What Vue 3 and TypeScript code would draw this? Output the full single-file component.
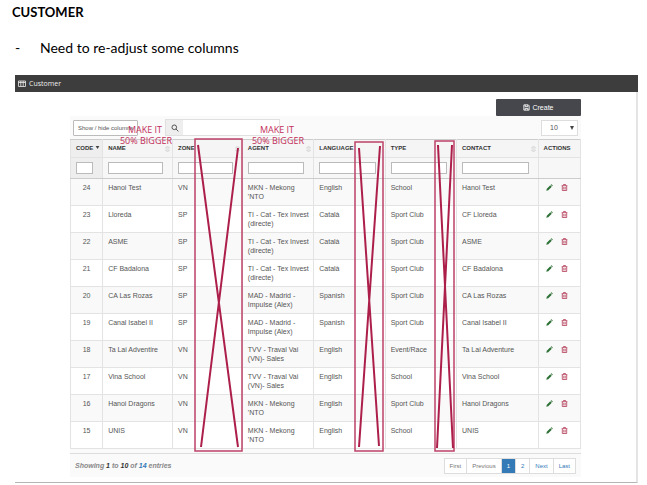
<script setup lang="ts">
interface Customer {
  code: number
  name: string
  zone: string
  agent: string
  language: string
  type: string
  contact: string
}

const columns = [
  { key: 'name', label: 'Name', sort: true },
  { key: 'zone', label: 'Zone', sort: true },
  { key: 'agent', label: 'Agent', sort: true },
  { key: 'language', label: 'Language', sort: false },
  { key: 'type', label: 'Type', sort: false },
  { key: 'contact', label: 'Contact', sort: true },
]

const mkn = "MKN - Mekong 'NTO"
const cat = 'TI - Cat - Tex Invest (directe)'
const mad = 'MAD - Madrid - Impulse (Alex)'
const tvv = 'TVV - Traval Vai (VN)- Sales'

const customers: Customer[] = [
  { code: 24, name: 'Hanoi Test', zone: 'VN', agent: mkn, language: 'English', type: 'School', contact: 'Hanoi Test' },
  { code: 23, name: 'Lloreda', zone: 'SP', agent: cat, language: 'Català', type: 'Sport Club', contact: 'CF Lloreda' },
  { code: 22, name: 'ASME', zone: 'SP', agent: cat, language: 'Català', type: 'Sport Club', contact: 'ASME' },
  { code: 21, name: 'CF Badalona', zone: 'SP', agent: cat, language: 'Català', type: 'Sport Club', contact: 'CF Badalona' },
  { code: 20, name: 'CA Las Rozas', zone: 'SP', agent: mad, language: 'Spanish', type: 'Sport Club', contact: 'CA Las Rozas' },
  { code: 19, name: 'Canal Isabel II', zone: 'SP', agent: mad, language: 'Spanish', type: 'Sport Club', contact: 'Canal Isabel II' },
  { code: 18, name: 'Ta Lai Adventire', zone: 'VN', agent: tvv, language: 'English', type: 'Event/Race', contact: 'Ta Lai Adventure' },
  { code: 17, name: 'Vina School', zone: 'VN', agent: tvv, language: 'English', type: 'School', contact: 'Vina School' },
  { code: 16, name: 'Hanoi Dragons', zone: 'VN', agent: mkn, language: 'English', type: 'Sport Club', contact: 'Hanoi Dragons' },
  { code: 15, name: 'UNIS', zone: 'VN', agent: mkn, language: 'English', type: 'School', contact: 'UNIS' },
]
</script>

<template>
  <main class="doc">
    <h1>CUSTOMER</h1>
    <ul class="notes">
      <li>Need to re-adjust some columns</li>
    </ul>

    <section class="window">
      <header class="titlebar">
        <svg class="grid-icon" viewBox="0 0 8 7" aria-hidden="true">
          <path d="M.5 1h7v5.500h-7zM.5 2.500h7M2.800 1v5.500M5.200 1v5.500" />
        </svg>
        <h2>Customer</h2>
      </header>

      <div class="body">
        <div class="create-row">
          <button type="button" class="create">
            <svg viewBox="0 0 8 8" aria-hidden="true">
              <path d="M1 1h5l1 1v5H1zM2.500 1v2h3V1M2.500 7V5h3v2" />
            </svg>
            Create
          </button>
        </div>

        <div class="panel">
          <div class="toolbar">
            <button type="button" class="toggle">Show / hide columns</button>
            <label class="search">
              <span class="search-icon">
                <svg viewBox="0 0 9 9" aria-hidden="true">
                  <circle cx="3.700" cy="3.700" r="2.600" />
                  <path d="M5.600 5.600L8.300 8.300" />
                </svg>
              </span>
              <input type="search" aria-label="Search customers" />
            </label>
            <div class="size">
              <select aria-label="Rows per page">
                <option>10</option>
                <option>25</option>
              </select>
              <svg viewBox="0 0 4 4" aria-hidden="true"><path d="M0 0h4L2 4z" /></svg>
            </div>
          </div>

          <div class="grid">
            <table>
              <colgroup>
                <col class="c-code" />
                <col class="c-name" />
                <col class="c-name" />
                <col class="c-wide" />
                <col class="c-wide" />
                <col class="c-wide" />
                <col class="c-contact" />
                <col class="c-actions" />
              </colgroup>
              <thead>
                <tr class="heads">
                  <th class="sorted" scope="col">
                    Code<svg class="caret" viewBox="0 0 5 4" aria-hidden="true"><path d="M0 0h5L2.500 4z" /></svg>
                  </th>
                  <th v-for="c in columns" :key="c.key" scope="col">
                    <div class="head">
                      {{ c.label }}
                      <svg v-if="c.sort" class="sort" viewBox="0 0 5 8" aria-hidden="true">
                        <path d="M.5 3l2-2 2 2zM.5 5l2 2 2-2z" />
                      </svg>
                    </div>
                  </th>
                  <th scope="col">Actions</th>
                </tr>
                <tr class="filters">
                  <td class="sorted"><input type="text" aria-label="Filter by code" /></td>
                  <td v-for="c in columns" :key="c.key">
                    <input type="text" :aria-label="'Filter by ' + c.label" />
                  </td>
                  <td></td>
                </tr>
              </thead>
              <tbody>
                <tr v-for="row in customers" :key="row.code">
                  <td class="code">{{ row.code }}</td>
                  <td>{{ row.name }}</td>
                  <td>{{ row.zone }}</td>
                  <td>{{ row.agent }}</td>
                  <td>{{ row.language }}</td>
                  <td>{{ row.type }}</td>
                  <td>{{ row.contact }}</td>
                  <td>
                    <div class="actions">
                      <button type="button" class="edit" :aria-label="'Edit ' + row.name">
                        <svg viewBox="0 0 7 7" aria-hidden="true">
                          <path d="M.3 6.700l.5-2L4.300 1.200l1.500 1.500-3.500 3.500zM4.700.8l.8-.6 1.300 1.300-.6.800z" />
                        </svg>
                      </button>
                      <button type="button" class="remove" :aria-label="'Delete ' + row.name">
                        <svg viewBox="0 0 7 7" aria-hidden="true">
                          <path d="M.7 1.700h5.600M2.500 1.500V.5h2v1M1.300 1.700v4.800h4.400V1.700M2.800 3v2.500M4.200 3v2.500" />
                        </svg>
                      </button>
                    </div>
                  </td>
                </tr>
              </tbody>
            </table>

            <svg class="markup" viewBox="0 0 511 334" preserveAspectRatio="none">
              <g class="box">
                <rect x="125" y="18" width="47" height="312" />
                <rect x="285" y="21" width="28" height="309" />
                <rect x="365" y="20" width="19" height="310" />
              </g>
              <g class="cross">
                <path d="M128 24L168 326M168 27L131 326" />
                <path d="M289 27L309 325M310 25L289 326" />
                <path d="M368 24L383 327M382 24L367 327" />
              </g>
              <g class="note">
                <text x="75" y="12">MAKE IT</text>
                <text x="76" y="23">50% BIGGER</text>
                <text x="207" y="12">MAKE IT</text>
                <text x="208" y="23">50% BIGGER</text>
              </g>
            </svg>
          </div>

          <footer class="foot">
            <p>Showing <b>1</b> to <b>10</b> of <b class="total">14</b> entries</p>
            <nav class="pager" aria-label="Pages">
              <a class="muted" href="#first">First</a>
              <a class="muted" href="#previous">Previous</a>
              <a class="current" href="#1" aria-current="page">1</a>
              <a href="#2">2</a>
              <a href="#next">Next</a>
              <a href="#last">Last</a>
            </nav>
          </footer>
        </div>
      </div>
    </section>
  </main>
</template>

<style>
body {
  background: #fff;
}
</style>

<style scoped>
* {
  box-sizing: border-box;
}

.doc {
  padding: 3px 9px 2px 15px;
  font-family: "Liberation Sans", Arial, sans-serif;
  font-size: 7px;
  color: #555;
}

h1 {
  margin: 0 0 0 -3px;
  font: bold 13px/18px Lato, sans-serif;
  color: #000;
}

.notes {
  margin: 18px 0 18px;
  padding: 0;
  list-style: none;
  font: 14px/18px Lato, sans-serif;
  color: #000;
}

.notes li {
  display: flex;
}

.notes li::before {
  content: "-";
  width: 25px;
}

.window {
  border-right: 2px solid #e4e4e4;
  border-bottom: 1px solid #b5b5b5;
}

.titlebar {
  display: flex;
  align-items: center;
  gap: 3px;
  height: 17px;
  margin-right: -2px;
  padding-left: 3px;
  background: #3d3d3d;
  color: #eee;
}

.titlebar h2 {
  margin: 0;
  font: 7px/12px "Open Sans", sans-serif;
}

.grid-icon {
  width: 8px;
  height: 7px;
  fill: none;
  stroke: #eee;
  stroke-width: 0.8;
}

.body {
  padding: 7px 55px 5px 55px;
}

.create-row {
  display: flex;
  justify-content: flex-end;
}

button,
input,
select {
  margin: 0;
  font-family: inherit;
}

.create {
  display: flex;
  align-items: center;
  justify-content: center;
  gap: 2px;
  width: 85px;
  height: 17px;
  padding: 0;
  border: 0;
  border-radius: 1px;
  background: #45474d;
  color: #fff;
  font-size: 7px;
}

.create svg {
  width: 7px;
  height: 7px;
  fill: none;
  stroke: #fff;
}

.panel {
  background: #fafafa;
}

.toolbar {
  display: flex;
  align-items: center;
  height: 23px;
  padding: 0 3px 0 3px;
}

.toggle {
  width: 65px;
  height: 16px;
  padding: 0 0 0 4px;
  overflow: hidden;
  border: 1px solid #bbb;
  border-radius: 1px;
  background: #fff;
  color: #555;
  font-size: 6px;
  text-align: left;
  white-space: nowrap;
}

.search {
  display: flex;
  width: 115px;
  height: 17px;
  margin-left: 27px;
  border: 1px solid #e0e0e0;
  background: #fff;
}

.search-icon {
  display: flex;
  align-items: center;
  justify-content: center;
  width: 17px;
  background: #eee;
}

.search-icon svg {
  width: 8px;
  height: 8px;
  fill: none;
  stroke: #444;
}

.search input {
  flex: 1;
  min-width: 0;
  padding: 0 3px;
  border: 0;
  background: #fff;
  font-size: 7px;
}

.size {
  position: relative;
  width: 37px;
  height: 16px;
  margin-left: auto;
}

.size select {
  width: 100%;
  height: 100%;
  padding: 0 8px;
  appearance: none;
  border: 1px solid #ddd;
  border-radius: 0;
  background: #fff;
  color: #555;
  font-size: 7px;
}

.size svg {
  position: absolute;
  top: 6px;
  right: 4px;
  width: 4px;
  height: 4px;
  fill: #444;
  pointer-events: none;
}

.grid {
  position: relative;
  padding-bottom: 4px;
}

table {
  width: 100%;
  table-layout: fixed;
  border-collapse: collapse;
  background: #fff;
}

.c-code { width: 6.3%; }
.c-name { width: 13.7%; }
.c-wide { width: 14%; }
.c-contact { width: 16%; }
.c-actions { width: 8.300%; }

th,
td {
  padding: 4px 5px 0;
  border: 1px solid #e3e3e3;
  line-height: 9px;
  text-align: left;
  vertical-align: top;
}

.heads th {
  height: 18px;
  border-top-color: #ccc;
  background: #f5f5f5;
  color: #333;
  font-size: 6px;
  text-transform: uppercase;
  white-space: nowrap;
}

.heads .sorted,
.filters .sorted {
  background: #eee;
}

.caret {
  width: 5px;
  height: 3px;
  margin: 0 0 1px 2px;
  fill: #444;
}

.head {
  display: flex;
  align-items: center;
  justify-content: space-between;
}

.sort {
  width: 5px;
  height: 8px;
  margin-right: -3px;
  fill: none;
  stroke: #ccc;
  stroke-width: 0.7;
}

.filters td {
  height: 21px;
  padding: 4px 9px 0 5px;
  border-bottom: 1px solid #ccc;
  background: #f7f7f7;
}

.filters input {
  display: block;
  width: 100%;
  height: 12px;
  padding: 0 2px;
  border: 1px solid #bbb;
  background: #fff;
  font-size: 6px;
}

tbody td {
  height: 27px;
  padding-right: 2px;
}

tbody tr:nth-child(odd) {
  background: #f9f9f9;
}

tbody .code {
  padding-right: 5px;
  text-align: center;
}

.actions {
  display: flex;
  gap: 8px;
  padding: 1px 0 0 2px;
}

.actions button {
  width: 7px;
  height: 7px;
  padding: 0;
  border: 0;
  background: none;
}

.actions svg {
  display: block;
  width: 7px;
  height: 7px;
}

.edit svg {
  fill: #2f7238;
}

.remove svg {
  fill: none;
  stroke: #b23a55;
  stroke-width: 0.8;
}

.markup {
  position: absolute;
  top: -18px;
  left: 0;
  width: 100%;
  height: 334px;
  overflow: visible;
  pointer-events: none;
}

.box {
  fill: none;
  stroke: #bd4268;
  stroke-width: 1.500;
}

.cross {
  fill: none;
  stroke: #ad1f4b;
  stroke-width: 2;
}

.note {
  fill: #c22f5b;
  font: 9px "Open Sans", sans-serif;
  text-anchor: middle;
}

.foot {
  display: flex;
  align-items: center;
  justify-content: space-between;
  height: 24px;
  padding: 0 5px;
  border-top: 1px solid #ddd;
}

.foot p {
  margin: 0;
  color: #888;
  font-size: 7px;
  font-style: italic;
  font-weight: bold;
}

.foot b {
  color: #333;
}

.foot .total {
  color: #337ab7;
}

.pager {
  display: flex;
  border: 1px solid #ddd;
  background: #fff;
}

.pager a {
  padding: 0 5px;
  border-right: 1px solid #ddd;
  color: #337ab7;
  font-size: 6px;
  line-height: 14px;
  text-decoration: none;
}

.pager a:last-child {
  border-right: 0;
}

.pager .muted {
  color: #777;
}

.pager .current {
  background: #337ab7;
  color: #fff;
}
</style>
